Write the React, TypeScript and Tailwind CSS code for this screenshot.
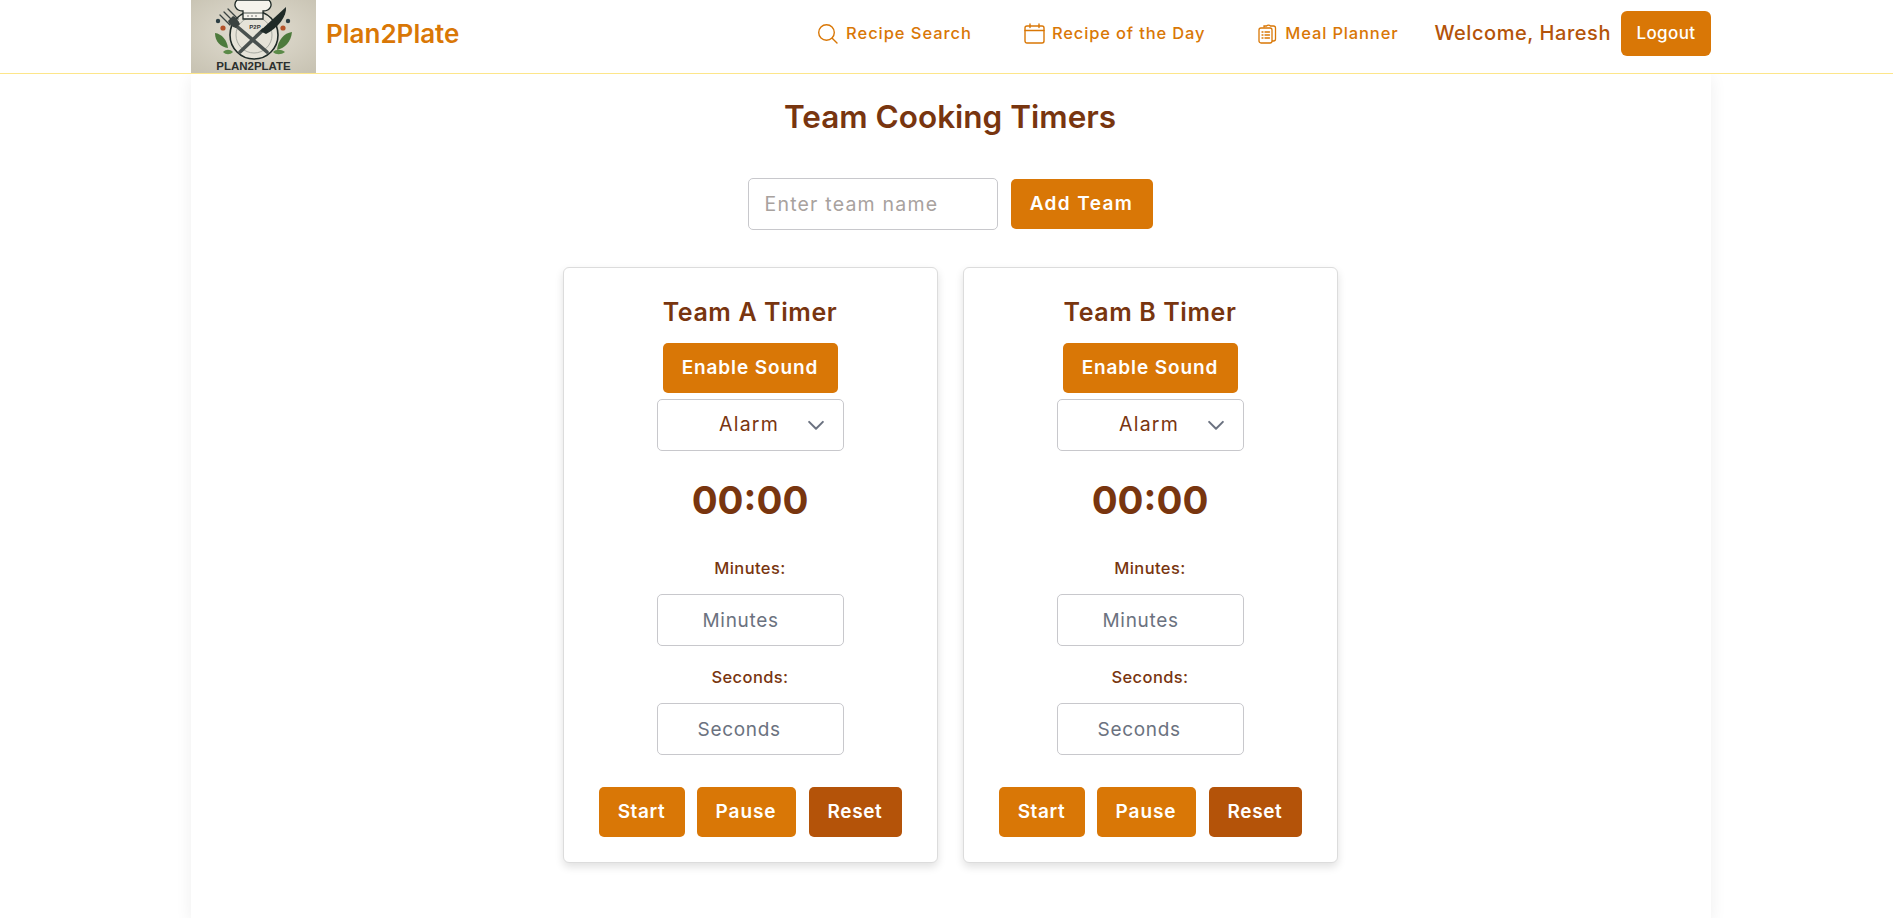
import React from "react";

const font = { fontFamily: '"Inter", "Open Sans", sans-serif' };

function Logo() {
  return (
    <svg viewBox="0 0 125 73" className="w-[125px] h-[73px] shrink-0 block">
      <defs>
        <radialGradient id="lg" cx="50%" cy="45%" r="70%">
          <stop offset="0%" stopColor="#e3dfd3" />
          <stop offset="100%" stopColor="#c8c3b3" />
        </radialGradient>
      </defs>
      <rect width="125" height="73" fill="url(#lg)" />
      <circle cx="63" cy="35" r="24" fill="#e6e3d8" stroke="#1f2a27" strokeWidth="1.6" />
      <circle cx="63" cy="35" r="18" fill="none" stroke="#8d918a" strokeWidth="0.7" />
      <path d="M52 19V11c-8 0-10-7-6-11h32c4 4 2 11-6 11v8z" fill="#f5f3ec" stroke="#1f2a27" strokeWidth="1.3" />
      <path d="M52 13h20" stroke="#1f2a27" strokeWidth="0.8" />
      <path d="M56 16h12" stroke="#777" strokeWidth="1" strokeDasharray="2 2" />
      <path d="M43 24L76 52" stroke="#4a514f" strokeWidth="3.6" strokeLinecap="round" />
      <path d="M29 15L39 25M33 12L43 22M37 9L47 19" stroke="#3a4240" strokeWidth="1.3" strokeLinecap="round" />
      <path d="M37 21c1 3 4 6 8 7l4-4c-2-4-4-7-7-8z" fill="#3a4240" />
      <path d="M49 52L72 30" stroke="#4a514f" strokeWidth="3.6" strokeLinecap="round" />
      <path d="M69 31L95 7c1 9-8 21-20 27z" fill="#1f2a27" />
      <text x="64" y="29" textAnchor="middle" fontSize="6" fontWeight="700" fill="#333" fontFamily="Liberation Sans">P2P</text>
      <path d="M24 33c7 1 12 7 13 15-7-1-13-6-13-15z" fill="#4d7a3c" />
      <path d="M101 32c-8 1-14 8-15 18 8-2 14-8 15-18z" fill="#4d7a3c" />
      <path d="M32 52c3-3 7-3 10 0-3 3-7 3-10 0z" fill="#5b8a48" />
      <path d="M82 52c3-3 8-3 12 0-4 3-9 3-12 0z" fill="#5b8a48" />
      <circle cx="32" cy="28" r="2.6" fill="#b4532a" />
      <circle cx="27" cy="21" r="2.2" fill="#2c3e44" />
      <circle cx="92" cy="28" r="2.6" fill="#b4532a" />
      <circle cx="97" cy="21" r="2.2" fill="#2c3e44" />
      <text x="62.5" y="70" textAnchor="middle" fontSize="11.5" fontWeight="700" fill="#2b2f2e" fontFamily="Liberation Sans">PLAN2PLATE</text>
    </svg>
  );
}

function NavLink({ icon, label, cls }: { icon: React.ReactNode; label: string; cls: string }) {
  return (
    <a className={`flex items-center text-[16.5px] font-medium text-[#d97706] ${cls}`}>
      {icon}
      <span>{label}</span>
    </a>
  );
}

const iconCls = "w-[21px] h-[21px] shrink-0";

function SearchIcon() {
  return (
    <svg viewBox="0 0 21 21" className={iconCls} fill="none" stroke="currentColor" strokeWidth="1.4">
      <circle cx="9.5" cy="9.5" r="7.8" />
      <path d="M15.2 15.2L20 20" strokeLinecap="round" />
    </svg>
  );
}
function CalendarIcon() {
  return (
    <svg viewBox="0 0 21 21" className={iconCls} fill="none" stroke="currentColor" strokeWidth="1.4">
      <rect x="1" y="3" width="19" height="17" rx="2" />
      <path d="M1 7.5h19M6 1v3.5M15 1v3.5" strokeLinecap="round" />
    </svg>
  );
}
function PlannerIcon() {
  return (
    <svg viewBox="0 0 21 21" className={iconCls} fill="none" stroke="currentColor" strokeWidth="1.3">
      <path d="M7 4.5V3h2.5a2.5 2 0 0 1 4 0H16.5a2 2 0 0 1 2 2v11a2 2 0 0 1-2 2h-1.5" />
      <rect x="2" y="5" width="13" height="15" rx="2" />
      <path d="M5 9h1M8 9h4.5M5 12h1M8 12h4.5M5 15h1M8 15h4.5" strokeLinecap="round" />
    </svg>
  );
}

function Btn({ label, cls, dark }: { label: string; cls: string; dark?: boolean }) {
  return (
    <button className={`h-[50px] rounded-[5px] text-[19px] font-semibold text-white ${dark ? "bg-[#b45309]" : "bg-[#d97706]"} ${cls}`}>
      {label}
    </button>
  );
}

function Field({ label, placeholder, pl }: { label: string; placeholder: string; pl: string }) {
  return (
    <>
      <div className="text-[16.5px] leading-[24px] font-medium tracking-[0.4px] text-[#78350f] text-center">{label}</div>
      <input
        readOnly
        placeholder={placeholder}
        className={`block w-[187px] h-[52px] mt-[14px] mx-auto bg-white border border-[#c8c8cc] rounded-[5px] text-[19px] tracking-[0.7px] outline-none placeholder:text-[#6b7280] ${pl}`}
      />
    </>
  );
}

function TeamCard({ name }: { name: string }) {
  return (
    <div className="w-[375px] h-[596px] bg-white border border-[#dcdcdc] rounded-[6px] shadow-[0_4px_8px_rgba(0,0,0,0.12)] flex flex-col items-center pt-[28px]">
      <h3 className="text-[25px] leading-[32px] font-semibold tracking-[0.6px] text-[#78350f]">{name}</h3>
      <Btn label="Enable Sound" cls="w-[175px] mt-[15px] tracking-[0.9px]" />
      <div className="relative w-[187px] h-[52px] mt-[6px] border border-[#c8c8cc] rounded-[5px] flex items-center justify-center text-[19.5px] tracking-[1.2px] text-[#78350f]">
        <span className="mr-[2px]">Alarm</span>
        <svg viewBox="0 0 16 16" className="absolute right-[17px] top-[15px] w-[20px] h-[20px]" fill="none" stroke="#6b7280" strokeWidth="1.6">
          <path d="M2.5 5.5L8 11l5.5-5.5" strokeLinecap="round" strokeLinejoin="round" />
        </svg>
      </div>
      <div className="text-[38.5px] leading-[48px] font-bold text-[#78350f] mt-[25px]">00:00</div>
      <div className="mt-[32px] w-full">
        <Field label="Minutes:" placeholder="Minutes" pl="pl-[45px]" />
      </div>
      <div className="mt-[19px] w-full">
        <Field label="Seconds:" placeholder="Seconds" pl="pl-[40px]" />
      </div>
      <div className="flex gap-[12px] mt-[32px]">
        <Btn label="Start" cls="w-[86px] tracking-[0.6px]" />
        <Btn label="Pause" cls="w-[99px] tracking-[0.9px]" />
        <Btn label="Reset" cls="w-[93px] ml-[1px] tracking-[0.6px]" dark />
      </div>
    </div>
  );
}

export default function App() {
  return (
    <div style={font} className="h-[918px] overflow-hidden bg-white">
      <header className="h-[74px] bg-white border-b border-[#fde68a] relative z-10">
        <div className="ml-[191px] w-[1520px] h-[73px] pb-[7px] flex items-center">
          <div className="self-start"><Logo /></div>
          <span className="ml-[10px] text-[26px] font-semibold text-[#d97706]">Plan2Plate</span>
          <nav className="ml-auto flex items-center gap-[52px] text-[#d97706]">
            <NavLink icon={<SearchIcon />} label="Recipe Search" cls="gap-[8px] tracking-[0.95px]" />
            <NavLink icon={<CalendarIcon />} label="Recipe of the Day" cls="gap-[7px] tracking-[0.85px]" />
            <NavLink icon={<PlannerIcon />} label="Meal Planner" cls="gap-[7px] tracking-[0.85px]" />
          </nav>
          <span className="ml-[36px] text-[20px] font-medium tracking-[0.55px] text-[#b45309]">Welcome, Haresh</span>
          <button className="ml-[10px] w-[90px] h-[45px] pt-[1px] rounded-[6px] bg-[#d97706] text-white text-[17px] font-medium tracking-[0.4px]">Logout</button>
        </div>
      </header>
      <main className="ml-[191px] w-[1520px] h-[844px] pr-[2px] bg-white shadow-[0_4px_16px_rgba(0,0,0,0.07)] flex flex-col items-center">
        <h2 className="mt-[23px] text-[31.5px] leading-[40px] font-semibold text-[#78350f]">Team Cooking Timers</h2>
        <div className="flex gap-[13px] mt-[41px]">
          <input
            readOnly
            placeholder="Enter team name"
            className="w-[250px] h-[52px] px-[16px] bg-white border border-[#c8c8cc] rounded-[5px] text-[19.5px] tracking-[1.2px] outline-none placeholder:text-[#a8a29e]"
          />
          <Btn label="Add Team" cls="w-[142px] mt-[1px] tracking-[1.4px]" />
        </div>
        <div className="flex gap-[25px] mt-[37px]">
          <TeamCard name="Team A Timer" />
          <TeamCard name="Team B Timer" />
        </div>
      </main>
    </div>
  );
}
